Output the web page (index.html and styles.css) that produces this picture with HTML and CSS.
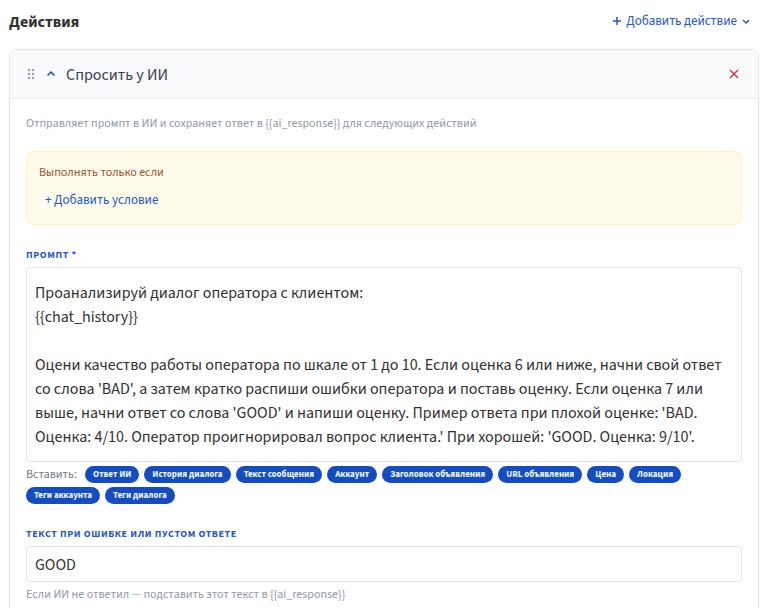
FILE: index.html
```html
<!DOCTYPE html>
<html lang="ru">
<head>
<meta charset="utf-8">
<title>Действия</title>
<link rel="stylesheet" href="styles.css">
</head>
<body>
<main class="page">
  <header class="page-head">
    <h1 class="page-title">Действия</h1>
    <button class="add-action" type="button">
      <svg class="icon-plus" viewBox="0 0 10 10" aria-hidden="true"><path d="M5 1v8M1 5h8"/></svg>
      <span>Добавить действие</span>
      <svg class="icon-chevron" viewBox="0 0 10 10" aria-hidden="true"><path d="M2 4l3 3 3-3"/></svg>
    </button>
  </header>

  <section class="card">
    <div class="card-head">
      <svg class="icon-grip" viewBox="0 0 8 12" aria-hidden="true"><circle cx="2" cy="2" r="1.3"/><circle cx="6" cy="2" r="1.3"/><circle cx="2" cy="6" r="1.3"/><circle cx="6" cy="6" r="1.3"/><circle cx="2" cy="10" r="1.3"/><circle cx="6" cy="10" r="1.3"/></svg>
      <button class="icon-button" type="button" aria-label="Свернуть">
        <svg class="icon-chevron" viewBox="0 0 10 10" aria-hidden="true"><path d="M1.5 6.5L5 3l3.5 3.5"/></svg>
      </button>
      <h2 class="card-title">Спросить у ИИ</h2>
      <button class="icon-button danger" type="button" aria-label="Удалить">
        <svg class="icon-close" viewBox="0 0 10 10" aria-hidden="true"><path d="M1 1l8 8M9 1L1 9"/></svg>
      </button>
    </div>

    <div class="card-body">
      <p class="hint">Отправляет промпт в ИИ и сохраняет ответ в {{ai_response}} для следующих действий</p>

      <div class="condition">
        <p class="condition-title">Выполнять только если</p>
        <button class="add-condition" type="button">+ Добавить условие</button>
      </div>

      <div class="field">
        <label class="label" for="prompt">Промпт *</label>
        <textarea class="input prompt" id="prompt" rows="7">Проанализируй диалог оператора с клиентом:
{{chat_history}}

Оцени качество работы оператора по шкале от 1 до 10. Если оценка 6 или ниже, начни свой ответ со слова 'BAD', а затем кратко распиши ошибки оператора и поставь оценку. Если оценка 7 или выше, начни ответ со слова 'GOOD' и напиши оценку. Пример ответа при плохой оценке: 'BAD. Оценка: 4/10. Оператор проигнорировал вопрос клиента.' При хорошей: 'GOOD. Оценка: 9/10'.</textarea>
        <div class="tags">
          <span class="tags-label">Вставить:</span>
          <button class="tag" type="button">Ответ ИИ</button>
          <button class="tag" type="button">История диалога</button>
          <button class="tag" type="button">Текст сообщения</button>
          <button class="tag" type="button">Аккаунт</button>
          <button class="tag" type="button">Заголовок объявления</button>
          <button class="tag" type="button">URL объявления</button>
          <button class="tag" type="button">Цена</button>
          <button class="tag" type="button">Локация</button>
          <button class="tag" type="button">Теги аккаунта</button>
          <button class="tag" type="button">Теги диалога</button>
        </div>
      </div>

      <div class="field">
        <label class="label" for="fallback">Текст при ошибке или пустом ответе</label>
        <input class="input fallback" id="fallback" type="text" value="GOOD">
        <p class="hint after">Если ИИ не ответил — подставить этот текст в {{ai_response}}</p>
      </div>
    </div>
  </section>
</main>
</body>
</html>
```
FILE: styles.css
```css
* {
  box-sizing: border-box;
}

html {
  overflow: hidden;
}

body {
  margin: 0;
  background: #fff;
  color: #32312f;
  font: 16px/24px "Source Sans 3", "Source Sans Pro", "Noto Sans CJK SC", "Noto Sans", sans-serif;
}

h1, h2, p {
  margin: 0;
}

button, input, textarea {
  font: inherit;
}

button {
  border: 0;
  padding: 0;
  background: none;
  cursor: pointer;
}

svg {
  display: block;
  fill: none;
  stroke: currentColor;
  stroke-width: 1.5;
}

.page {
  padding: 10px 12px 0 9px;
}

.page-head {
  display: flex;
  align-items: flex-start;
  justify-content: space-between;
  padding-right: 8px;
  margin-bottom: 15px;
}

.page-title {
  font-size: 16px;
  line-height: 24px;
  font-weight: 700;
}

.add-action {
  display: flex;
  align-items: center;
  gap: 4px;
  color: #2458c8;
  font-size: 13px;
  line-height: 22px;
}

.icon-plus,
.icon-chevron,
.icon-close {
  width: 10px;
  height: 10px;
}

.card {
  border: 1px solid #e2e5ea;
  border-radius: 8px;
  overflow: hidden;
}

.card-head {
  display: flex;
  align-items: center;
  padding: 11px 19px 11px 17px;
  border-bottom: 1px solid #e9ebef;
  background: #f8fafc;
}

.icon-grip {
  width: 8px;
  height: 12px;
  margin-right: 11px;
  fill: #9ca3af;
  stroke: none;
}

.icon-button {
  color: #144dc1;
}

.icon-button.danger {
  margin-left: auto;
  color: #e02424;
}

.icon-close {
  stroke-width: 1.2;
}

.card-title {
  margin-left: 10px;
  padding-top: 2px;
  color: #374151;
  font-size: 16px;
  line-height: 24px;
  font-weight: 400;
}

.card-body {
  padding: 17px 16px 16px;
}

.hint {
  color: #9299a6;
  font-size: 12px;
  line-height: 16px;
}

.condition {
  margin: 19px 0 24px;
  padding: 13px 12px 11px;
  border: 1px solid #fdf0b4;
  border-radius: 8px;
  background: #fffbeb;
}

.condition-title {
  color: #a0522d;
  font-size: 12px;
  line-height: 16px;
}

.add-condition {
  display: block;
  padding: 11px 6px 5px;
  color: #2458c8;
  font-size: 13px;
  line-height: 16px;
}

.field + .field {
  margin-top: 24px;
}

.label {
  display: block;
  margin-bottom: 6px;
  color: #2458c8;
  font-size: 10px;
  line-height: 12px;
  font-weight: 700;
  letter-spacing: 0.06em;
  text-transform: uppercase;
}

.input {
  display: block;
  width: 100%;
  border: 1px solid #dbe4f0;
  border-radius: 4px;
  background: #fff;
  color: #32312f;
  outline: 0;
}

.prompt {
  padding: 13px 8px 12px;
  resize: none;
  overflow: hidden;
}

.fallback {
  padding: 6px 8px 4px;
}

.tags {
  display: flex;
  flex-wrap: wrap;
  align-items: center;
  gap: 4px 5px;
  margin-top: 4px;
}

.tags-label {
  margin-right: 3px;
  color: #737a86;
  font-size: 12px;
  line-height: 16px;
}

.tag {
  padding: 0 8px;
  border-radius: 9px;
  background: #144dc1;
  color: #f1f5fd;
  font-size: 9px;
  line-height: 17px;
  font-weight: 700;
}

.after {
  margin-top: 5px;
}
```
